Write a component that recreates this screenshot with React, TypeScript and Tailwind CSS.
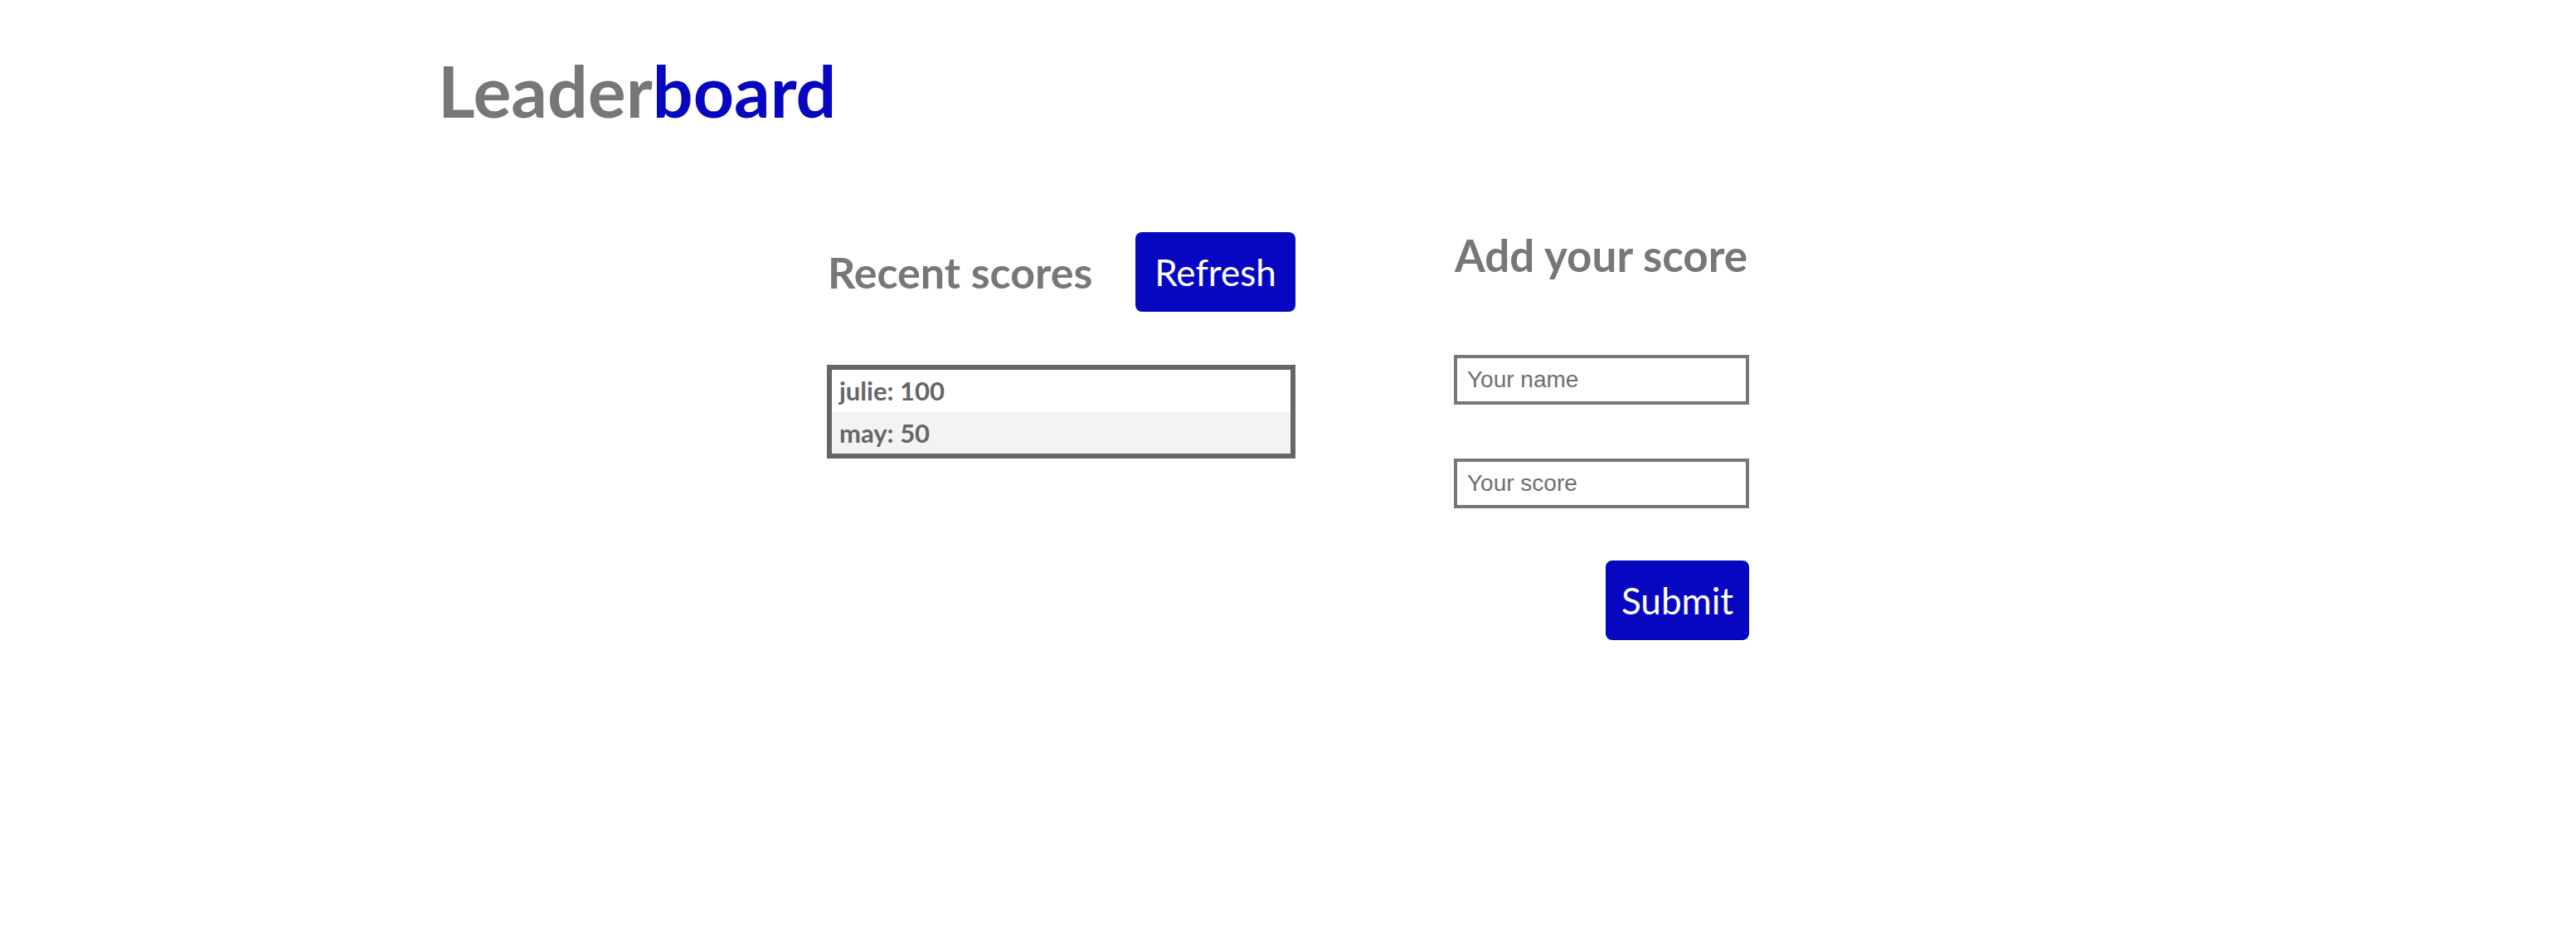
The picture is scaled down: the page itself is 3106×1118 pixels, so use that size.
import { useState } from 'react'

interface Score {
  user: string;
  score: number;
}

const initialScores: Score[] = [
  { user: 'julie', score: 100 },
  { user: 'may', score: 50 },
];

const App = () => {
  const [scores] = useState(initialScores);

  return (
    <div className="min-h-screen bg-white font-['Lato',sans-serif]">
      <header className="pl-[528px] pt-[66px]">
        <h1 className="text-[86px] font-bold leading-none">
          <span className="text-[#777777]">Leader</span>
          <span className="text-[#0707c1]">board</span>
        </h1>
      </header>

      <main className="flex justify-center gap-[191px] pt-[128px]">
        <section className="w-[565px]">
          <div className="flex h-[96px] items-center justify-between">
            <h2 className="pl-[1px] text-[52px] font-bold leading-none text-[#777777]">Recent scores</h2>
            <button className="h-[96px] w-[193px] rounded-[8px] bg-[#0707c1] text-[44px] leading-none text-white">
              Refresh
            </button>
          </div>

          <ul className="mt-[64px] border-[6px] border-[#666666]">
            {scores.map(({ user, score }, i) => (
              <li
                key={user}
                className={
                  i % 2 === 1
                    ? 'h-[50px] bg-[#f3f3f3] pl-[9px] text-[31px] font-bold leading-[50px] text-[#666666]'
                    : 'h-[51px] bg-white pl-[9px] text-[31px] font-bold leading-[51px] text-[#666666]'
                }
              >
                {user}: {score}
              </li>
            ))}
          </ul>
        </section>

        <section className="flex w-[356px] flex-col">
          <h2 className="mt-[1px] pl-[1px] text-[53px] font-bold leading-none text-[#777777]">Add your score</h2>
          <input
            placeholder="Your name"
            className="mt-[94px] h-[60px] w-full border-4 border-[#777777] bg-white px-[12px] font-['Liberation_Sans',sans-serif] text-[28px] text-[#444] outline-none placeholder:text-[#6f6f6f]"
          />
          <input
            placeholder="Your score"
            className="mt-[65px] h-[60px] w-full border-4 border-[#777777] bg-white px-[12px] font-['Liberation_Sans',sans-serif] text-[28px] text-[#444] outline-none placeholder:text-[#6f6f6f]"
          />
          <button className="mt-[63px] h-[96px] w-[173px] self-end rounded-[8px] bg-[#0707c1] text-[44px] leading-none text-white">
            Submit
          </button>
        </section>
      </main>
    </div>
  )
}

export default App;
